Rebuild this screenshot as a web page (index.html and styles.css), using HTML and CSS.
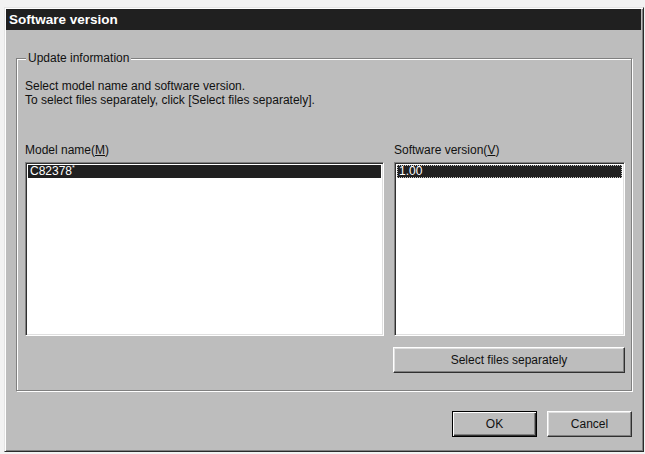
FILE: index.html
```html
<!DOCTYPE html>
<html lang="en">
<head>
    <meta charset="UTF-8">
    <title>Software version</title>
    <link rel="stylesheet" href="styles.css">
</head>
<body>
    <div class="dialog">
        <div class="titlebar">Software version</div>
        <div class="content">
            <fieldset class="group">
                <legend>Update information</legend>
                <div class="intro">
                    Select model name and software version.<br>
                    To select files separately, click [Select files separately].
                </div>
                <div class="columns">
                    <div class="col col-model">
                        <div class="label">Model name(<u>M</u>)</div>
                        <div class="listbox">
                            <div class="item selected">C82378<sup>*</sup></div>
                        </div>
                    </div>
                    <div class="col col-version">
                        <div class="label">Software version(<u>V</u>)</div>
                        <div class="listbox">
                            <div class="item selected focus">1.00</div>
                        </div>
                        <button class="btn btn-wide">Select files separately</button>
                    </div>
                </div>
            </fieldset>
            <div class="actions">
                <button class="btn btn-default">OK</button>
                <button class="btn">Cancel</button>
            </div>
        </div>
    </div>
</body>
</html>
```

FILE: styles.css
```css
body {
    margin: 0;
    padding: 7px 1px 0 4px;
    background: #f2f2f2;
    font-family: 'Liberation Sans', Arial, sans-serif;
    font-size: 12px;
    line-height: 14px;
    color: #111;
}
.dialog {
    width: 640px;
    height: 445px;
    box-sizing: border-box;
    background: #bdbdbd;
    border: 1px solid;
    border-color: #e4e4e4 #2a2a2a #2a2a2a #e4e4e4;
    box-shadow: inset 1px 1px 0 #fff, inset -1px -1px 0 #808080;
    padding: 1px 2px 1px 1px;
    display: flex;
    flex-direction: column;
}
.titlebar {
    height: 21px;
    line-height: 21px;
    background: #202020;
    color: #fff;
    font-weight: bold;
    font-size: 13.5px;
    padding-left: 3px;
}
.content {
    padding: 21px 9px 0 10px;
}
.group {
    margin: 0;
    padding: 0 6px 17px 8px;
    border: 1px solid #808080;
    box-shadow: inset 1px 1px 0 #fff, 1px 1px 0 #fff;
}
.group legend {
    margin-left: 1px;
    padding: 0 2px;
    background: #bdbdbd;
}
.intro {
    margin-top: 14px;
}
.columns {
    display: flex;
    gap: 10px;
    margin-top: 36px;
}
.col-model {
    width: 359px;
}
.col-version {
    width: 231px;
}
.label {
    margin-bottom: 5px;
}
.listbox {
    height: 174px;
    box-sizing: border-box;
    background: #fff;
    border: 1px solid;
    border-color: #808080 #fff #fff #808080;
    box-shadow: inset 1px 1px 0 #303030, inset -1px -1px 0 #dfdfdf;
    padding: 2px;
}
.item {
    height: 13px;
    line-height: 13px;
    padding-left: 2px;
}
.item sup {
    font-size: 7px;
    line-height: 0;
    vertical-align: 5px;
}
.selected {
    background: #202020;
    color: #fff;
}
.focus {
    outline: 1px dotted #c8c8c8;
    outline-offset: -1px;
}
.btn {
    font-family: inherit;
    font-size: 12px;
    color: #111;
    background: #bdbdbd;
    height: 26px;
    width: 85px;
    padding: 0;
    border: 1px solid;
    border-color: #fff #303030 #303030 #fff;
    box-shadow: inset -1px -1px 0 #808080, inset 1px 1px 0 #e0e0e0;
    cursor: pointer;
}
.btn-wide {
    display: block;
    width: 232px;
    margin-top: 11px;
    margin-left: -1px;
}
.btn-default {
    border: 1px solid #000;
    box-shadow: inset 1px 1px 0 #fff, inset -1px -1px 0 #303030, inset -2px -2px 0 #808080;
}
.actions {
    display: flex;
    justify-content: flex-end;
    gap: 10px;
    margin-top: 20px;
}
```
